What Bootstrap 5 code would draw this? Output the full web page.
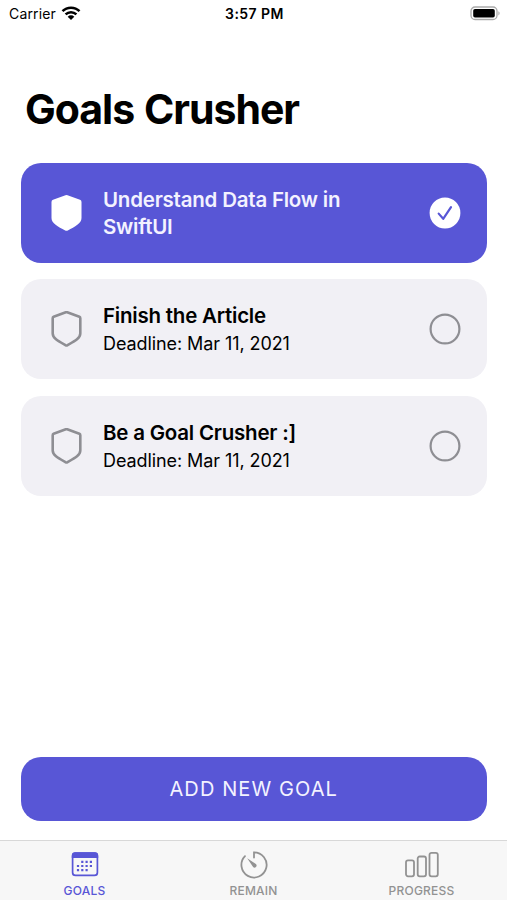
<!DOCTYPE html>
<html lang="en">
<head>
<meta charset="utf-8">
<meta name="viewport" content="width=device-width, initial-scale=1">
<title>Goals Crusher</title>
<link href="https://cdn.jsdelivr.net/npm/bootstrap@5.3.0/dist/css/bootstrap.min.css" rel="stylesheet">
<style>
  :root { --indigo: #5856d6; --tint: #f1f0f5; --gray: #8e8e93; }
  body { font-family: Inter, "Liberation Sans", sans-serif; color: #000; background: #fff; }
  svg { display: block; flex: none; }
  .status { height: 28px; padding: 0 7px 0 9px; font-size: 14px; line-height: 28px; }
  .status > * { flex: 1 1 0; }
  .carrier { letter-spacing: .15px; }
  .clock { font-weight: 600; letter-spacing: .45px; }
  .title { font-size: 41px; line-height: 50px; font-weight: 700; letter-spacing: -1px; word-spacing: 1px; margin: 56px 0 0 25px; }
  .goals { margin: 28.5px 20px 0 20.5px; gap: 16.5px; }
  .goal { height: 100px; border-radius: 20px; background: var(--tint); color: #000; padding: 0 26.5px 0 30.5px; }
  .goal.done { background: var(--indigo); color: #f3f2ff; }
  .goal-text { margin-left: 21px; }
  .goal-name { font-size: 20.5px; line-height: 27px; font-weight: 600; letter-spacing: -.22px; }
  .done .goal-name { max-width: 250px; }
  .goal-date { font-size: 18px; line-height: 24px; margin-top: 3px; letter-spacing: -.08px; }
  .goal-add { height: 64px; margin: 0 20px 19.5px 20.5px; border-radius: 20px; background: var(--indigo); color: #f3f2ff; font-size: 20px; letter-spacing: 1.1px; border: 0; }
  .goal-add:hover { background: #4b49c4; color: #fff; }
  .tabs { height: 60px; background: #f7f7f7; border-top: 1px solid #d8d8d8; color: #929292; }
  .tabs a { color: inherit; text-decoration: none; font-size: 12px; line-height: 14px; font-weight: 500; padding-top: 9px; letter-spacing: .2px; }
  .tabs a:last-child { padding-right: 2px; }
  .tabs a.current { color: var(--indigo); }
  .tabs svg { margin-bottom: 4px; }
</style>
</head>
<body>
<div class="d-flex flex-column vh-100 overflow-hidden">
  <header class="status d-flex align-items-center">
    <div class="d-flex align-items-center">
      <span class="carrier">Carrier</span>
      <svg class="ms-1" width="22" height="16" viewBox="0 0 22 16" fill="none" stroke="#000" stroke-width="2.5">
        <path d="M2.500 5.200a12 12 0 0 1 17 0"/><path d="M5.600 8.400a7.600 7.600 0 0 1 10.800 0"/>
        <path d="M11 14 7.700 10.700a4.700 4.700 0 0 1 6.600 0z" fill="#000" stroke="none"/>
      </svg>
    </div>
    <div class="clock text-center">3:57 PM</div>
    <div class="d-flex justify-content-end">
      <svg width="32" height="16" viewBox="0 0 32 16">
        <rect x="3" y="1" width="26" height="12.500" rx="4" fill="#fff" stroke="#aaa" stroke-width="1.300"/>
        <rect x="5.200" y="3" width="21.600" height="8.600" rx="1.800" fill="#000"/>
        <path d="M30.400 5.200c1.600 .6 1.600 3.600 0 4.200z" fill="#aaa"/>
      </svg>
    </div>
  </header>

  <h1 class="title">Goals Crusher</h1>

  <main class="goals d-flex flex-column">
    <div class="goal done d-flex align-items-center">
      <svg width="31" height="38" viewBox="0 0 31 38"><path d="M14.500 1.300Q15.500 .9 16.500 1.300L29 5.800Q30.500 6.400 30.500 8V24C30.500 29.500 24 32.500 16.800 36.500Q15.500 37.200 14.200 36.500C7 32.500 .5 29.500 .5 24V8Q.5 6.400 2 5.800Z" fill="#fff"/></svg>
      <div class="goal-text flex-grow-1"><div class="goal-name">Understand Data Flow in SwiftUI</div></div>
      <svg width="32" height="32" viewBox="0 0 32 32"><circle cx="16" cy="16" r="15.400" fill="#fff"/><path d="M9.700 16.600 14.200 21.800 22 10.200" fill="none" stroke="#5856d6" stroke-width="2.200" stroke-linecap="round" stroke-linejoin="round"/></svg>
    </div>
    <div class="goal d-flex align-items-center">
      <svg width="31" height="38" viewBox="0 0 31 38"><path d="M14.800 2.300Q15.500 2.100 16.200 2.300L28.400 6.800Q29.300 7.200 29.300 8.300V23.500C29.300 28.500 23.500 31.300 16.300 35.300Q15.500 35.700 14.700 35.300C7.500 31.300 1.700 28.500 1.700 23.500V8.300Q1.700 7.200 2.600 6.800Z" fill="none" stroke="#8e8e93" stroke-width="2.600" stroke-linejoin="round"/></svg>
      <div class="goal-text flex-grow-1"><div class="goal-name">Finish the Article</div><div class="goal-date">Deadline: Mar 11, 2021</div></div>
      <svg width="32" height="32" viewBox="0 0 32 32"><circle cx="16" cy="16" r="14.400" fill="none" stroke="#8e8e93" stroke-width="2.200"/></svg>
    </div>
    <div class="goal d-flex align-items-center">
      <svg width="31" height="38" viewBox="0 0 31 38"><path d="M14.800 2.300Q15.500 2.100 16.200 2.300L28.400 6.800Q29.300 7.200 29.300 8.300V23.500C29.300 28.500 23.500 31.300 16.300 35.300Q15.500 35.700 14.700 35.300C7.500 31.300 1.700 28.500 1.700 23.500V8.300Q1.700 7.200 2.600 6.800Z" fill="none" stroke="#8e8e93" stroke-width="2.600" stroke-linejoin="round"/></svg>
      <div class="goal-text flex-grow-1"><div class="goal-name">Be a Goal Crusher :]</div><div class="goal-date">Deadline: Mar 11, 2021</div></div>
      <svg width="32" height="32" viewBox="0 0 32 32"><circle cx="16" cy="16" r="14.400" fill="none" stroke="#8e8e93" stroke-width="2.200"/></svg>
    </div>
  </main>

  <button type="button" class="goal-add btn mt-auto">ADD NEW GOAL</button>

  <nav class="tabs d-flex flex-shrink-0">
    <a href="#" class="current col-4 d-flex flex-column align-items-center">
      <svg width="28" height="30" viewBox="0 0 28 30">
        <rect x="1.600" y="3.200" width="24.800" height="22.200" rx="3" fill="none" stroke="currentColor" stroke-width="1.700"/>
        <path d="M.8 8V5.500Q.8 2.300 4 2.300H24Q27.200 2.300 27.200 5.500V8Z" fill="currentColor"/>
        <path d="M10.200 11.800H22M5.900 16H22M5.900 20.200H17" fill="none" stroke="currentColor" stroke-width="2.200" stroke-dasharray="2.200 2.100"/>
      </svg>
      <span>GOALS</span>
    </a>
    <a href="#" class="col-4 d-flex flex-column align-items-center">
      <svg width="28" height="30" viewBox="0 0 28 30" fill="none" stroke="currentColor" stroke-width="1.800">
        <path d="M14 7.500V2.300A12.600 12.600 0 1 1 5 6.100" stroke-linecap="round"/>
        <path d="M7.200 8.200 15.900 14.100A2 2 0 0 1 13.100 17Z" fill="currentColor" stroke="none"/>
      </svg>
      <span>REMAIN</span>
    </a>
    <a href="#" class="col-4 d-flex flex-column align-items-center">
      <svg width="34" height="30" viewBox="0 0 34 30" fill="none" stroke="currentColor" stroke-width="1.800">
        <rect x="1" y="10.300" width="8" height="16" rx="2"/><rect x="12.700" y="6.500" width="8.300" height="19.800" rx="2"/><rect x="24.500" y="2.800" width="8.300" height="23.500" rx="2"/>
      </svg>
      <span>PROGRESS</span>
    </a>
  </nav>
</div>
<script src="https://cdn.jsdelivr.net/npm/bootstrap@5.3.0/dist/js/bootstrap.bundle.min.js"></script>
</body>
</html>
